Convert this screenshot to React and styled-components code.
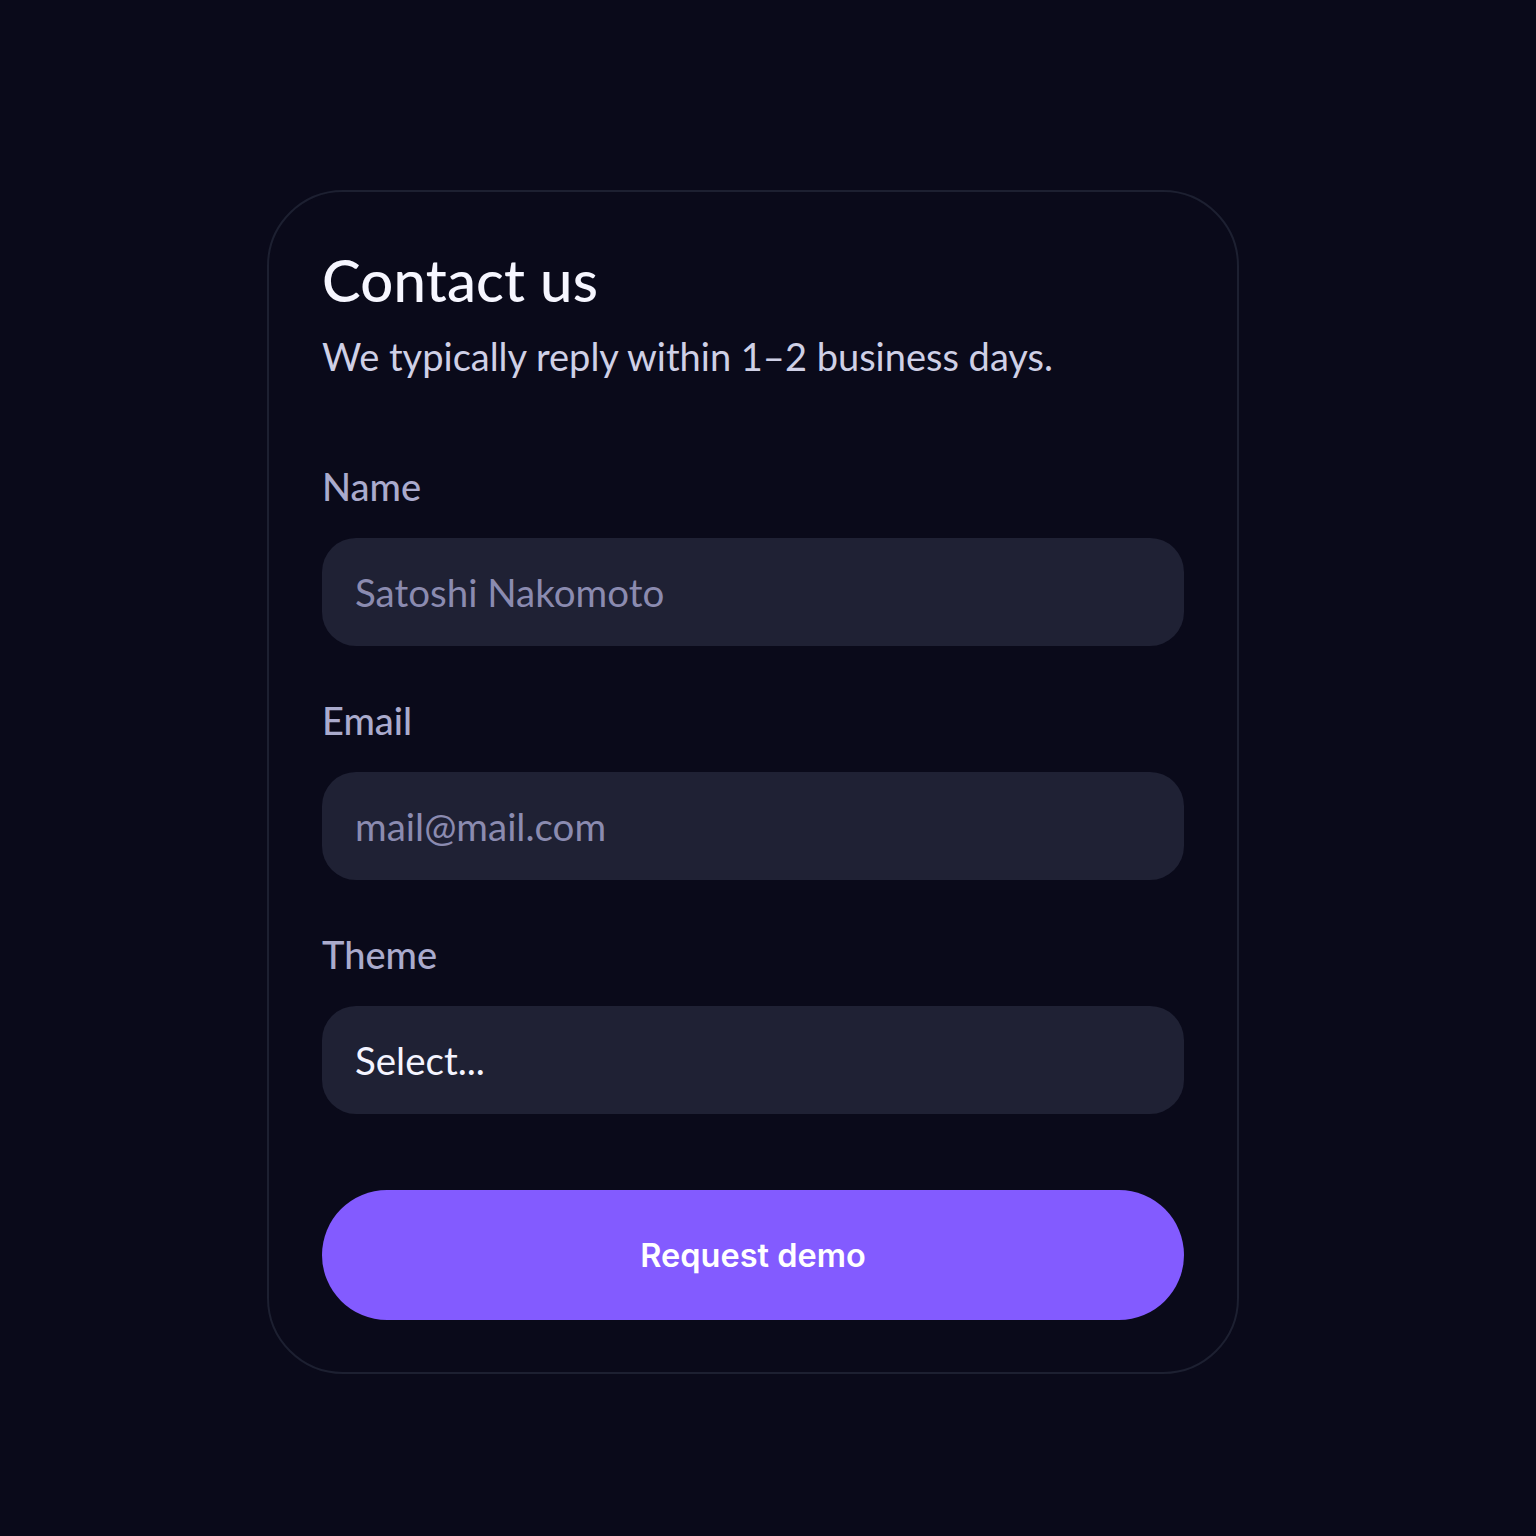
import React from "react";
import styled, { createGlobalStyle } from "styled-components";

const Global = createGlobalStyle`
  html, body {
    margin: 0;
    padding: 0;
    background: #0a0a1a;
  }
  body {
    font-family: "Lato", "Noto Sans", sans-serif;
    -webkit-font-smoothing: antialiased;
  }
`;

const Page = styled.div`
  min-height: 1536px;
  box-sizing: border-box;
  padding: 190px 0 0 267px;
  background: #0a0a1a;
`;

const Card = styled.form`
  box-sizing: border-box;
  width: 972px;
  border: 2px solid #1d2031;
  border-radius: 76px;
  padding: 54px 53px 52px 53px;
  display: flex;
  flex-direction: column;
`;

const Title = styled.h1`
  margin: 0;
  font-size: 58px;
  line-height: 68px;
  font-weight: 500;
  color: #f6f6ff;
  letter-spacing: 0.2px;
`;

const Subtitle = styled.p`
  margin: 20px 0 0;
  font-size: 38px;
  line-height: 44px;
  font-weight: 400;
  color: #cfd0e6;
`;

const Fields = styled.div`
  display: flex;
  flex-direction: column;
  gap: 52px;
  margin-top: 86px;
`;

const Field = styled.label`
  display: flex;
  flex-direction: column;
  gap: 30px;
`;

const LabelText = styled.span`
  font-size: 38px;
  line-height: 44px;
  font-weight: 500;
  color: #aaabcd;
`;

const Input = styled.div`
  box-sizing: border-box;
  height: 108px;
  border-radius: 34px;
  background: #1f2134;
  padding: 0 33px;
  display: flex;
  align-items: center;
  font-size: 38.5px;
  color: ${(p) => (p.$filled ? "#f4f4ff" : "#8b8bb0")};
`;

const Button = styled.button`
  margin-top: 76px;
  height: 130px;
  border: none;
  border-radius: 65px;
  background: #835bff;
  color: #ffffff;
  font-family: "Inter", "Liberation Sans", sans-serif;
  font-weight: 600;
  font-size: 32.5px;
  cursor: pointer;
`;

export default function App() {
  return (
    <>
      <Global />
      <Page>
        <Card onSubmit={(e) => e.preventDefault()}>
          <Title>Contact us</Title>
          <Subtitle>We typically reply within 1–2 business days.</Subtitle>
          <Fields>
            <Field>
              <LabelText>Name</LabelText>
              <Input>Satoshi Nakomoto</Input>
            </Field>
            <Field>
              <LabelText>Email</LabelText>
              <Input>mail@mail.com</Input>
            </Field>
            <Field>
              <LabelText>Theme</LabelText>
              <Input $filled>Select...</Input>
            </Field>
          </Fields>
          <Button type="submit">Request demo</Button>
        </Card>
      </Page>
    </>
  );
}
